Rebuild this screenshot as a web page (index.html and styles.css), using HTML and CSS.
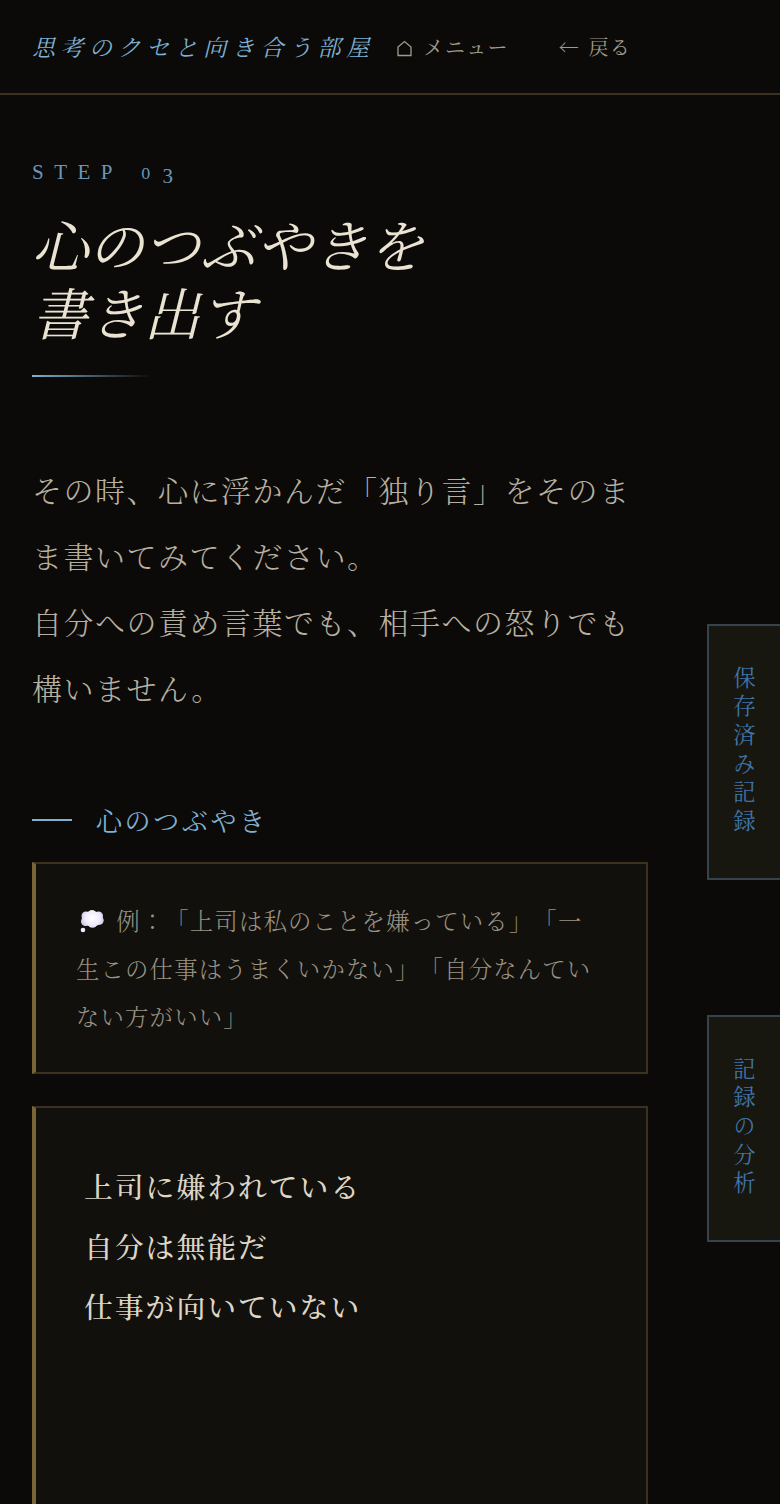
FILE: index.html
```html
<!DOCTYPE html>
<html lang="ja">
<head>
  <meta charset="UTF-8" />
  <meta name="viewport" content="width=device-width, initial-scale=1.0" />
  <title>思考のクセと向き合う部屋</title>
  <link rel="stylesheet" href="styles.css">
</head>
<body>

  <header class="site-header">
    <span class="site-title">思考のクセと向き合う部屋</span>
    <nav class="site-nav">
      <a class="nav-link">
        <svg class="nav-icon" viewBox="0 0 17 17" fill="none" stroke="currentColor" stroke-width="1.3">
          <path d="M2 7 L8.5 1.5 L15 7 V15.5 H2 Z" />
        </svg>メニュー
      </a>
      <a class="nav-link">← 戻る</a>
    </nav>
  </header>

  <main class="content">
    <p class="step-label">STEP <span class="step-zero">0</span><span class="step-three">3</span></p>
    <h1 class="page-title">心のつぶやきを<br>書き出す</h1>
    <div class="title-rule"></div>

    <p class="lead">その時、心に浮かんだ「独り言」をそのまま書いてみてください。<br>自分への責め言葉でも、相手への怒りでも構いません。</p>

    <label class="field-label" for="thoughts">心のつぶやき</label>
    <div class="example-box">
      <svg class="thought-icon" viewBox="0 0 26 24">
        <defs>
          <radialGradient id="bubble" gradientUnits="userSpaceOnUse" cx="13.5" cy="9" r="12">
            <stop offset="0" stop-color="#ffffff" />
            <stop offset="0.6" stop-color="#f0ecfb" />
            <stop offset="1" stop-color="#cfc6ea" />
          </radialGradient>
        </defs>
        <g fill="url(#bubble)">
          <ellipse cx="13.5" cy="10" rx="10" ry="7.5" />
          <circle cx="7" cy="7" r="4.5" />
          <circle cx="13" cy="5.5" r="4.5" />
          <circle cx="19.5" cy="7" r="4.5" />
          <circle cx="20.5" cy="11.5" r="4.2" />
          <circle cx="6.5" cy="12.5" r="4.5" />
          <circle cx="13.5" cy="14" r="4.8" />
          <circle cx="4" cy="21" r="2.3" fill="#eeeaf8" />
        </g>
      </svg>
      例：「上司は私のことを嫌っている」「一生この仕事はうまくいかない」「自分なんていない方がいい」
    </div>
    <textarea class="thoughts-input" id="thoughts">上司に嫌われている
自分は無能だ
仕事が向いていない</textarea>
  </main>

  <a class="side-tab side-tab-saved">保存済み記録</a>
  <a class="side-tab side-tab-analysis">記録の分析</a>

</body>
</html>
```

FILE: styles.css
```css
html, body {
  height: 1504px;
  overflow: hidden;
}

body {
  margin: 0;
  background-color: #0b0a09;
  background-image: radial-gradient(rgba(255, 255, 255, 0.02) 0.5px, transparent 0.5px);
  background-size: 4px 4px;
  color: #f0e8d8;
  font-family: "Noto Serif CJK JP", "Liberation Serif", "Noto Sans CJK JP", serif;
  text-spacing-trim: space-all;
}

.site-header {
  display: flex;
  align-items: center;
  gap: 21px;
  height: 93px;
  padding: 0 32px;
  border-bottom: 2px solid #3a3120;
}

.site-title {
  font-size: 23px;
  font-style: italic;
  letter-spacing: 5.55px;
  color: #7fb0d0;
  white-space: nowrap;
}

.site-nav {
  display: flex;
  gap: 50px;
}

.nav-link {
  font-size: 20px;
  letter-spacing: 1.3px;
  word-spacing: 2px;
  color: #a09a8a;
  white-space: nowrap;
}

.nav-icon {
  width: 17px;
  height: 17px;
  margin-right: 11px;
  vertical-align: -2px;
}

.content {
  width: 616px;
  padding: 0 32px;
}

.step-label {
  margin: 65px 0 0;
  font-family: "Liberation Serif", serif;
  font-size: 21px;
  letter-spacing: 0.5em;
  color: #6a97b8;
}

/* old style figures, the installed serif only has lining ones */
.step-zero {
  margin-left: 3px;
  font-family: "DejaVu Serif", serif;
  font-size: 15px;
  font-weight: 300;
  letter-spacing: 12px;
}

.step-three {
  position: relative;
  top: 4px;
}

.page-title {
  margin: 24px 0 0;
  font-size: 56px;
  font-weight: 400;
  font-style: italic;
  line-height: 68px;
  color: #ebe3d2;
}

.title-rule {
  width: 120px;
  height: 2px;
  margin-top: 30px;
  background: linear-gradient(to right, #7fb0d0, transparent);
}

.lead {
  margin: 79px 0 0;
  font-size: 30px;
  font-weight: 300;
  line-height: 66px;
  letter-spacing: 0.05em;
  color: #b8b0a0;
}

.field-label {
  display: flex;
  align-items: center;
  gap: 24px;
  margin-top: 81px;
  font-size: 26px;
  letter-spacing: 0.1em;
  color: #7fb0d0;
}

.field-label::before {
  content: "";
  width: 40px;
  height: 2px;
  background-color: #7fb0d0;
}

.example-box {
  margin-top: 24px;
  padding: 32px 40px;
  border: 2px solid #3a3120;
  border-left: 4px solid #7a6535;
  background-color: #11100c;
  font-size: 23.4px;
  font-weight: 300;
  line-height: 48px;
  letter-spacing: 1.15px;
  color: #9a9284;
}

.thought-icon {
  width: 26px;
  height: 24px;
  margin: 0 4px 0 3px;
  vertical-align: -3px;
}

.thoughts-input {
  display: block;
  box-sizing: border-box;
  width: 100%;
  height: 520px;
  margin-top: 32px;
  padding: 48px;
  border: 2px solid #3a3120;
  border-left: 4px solid #7a6535;
  border-radius: 0;
  background-color: #11100c;
  color: #ddd5c5;
  font-family: inherit;
  font-size: 28.8px;
  font-weight: 500;
  line-height: 60px;
  letter-spacing: 2px;
  resize: none;
  outline: none;
}

/* fixed tabs on the right edge */
.side-tab {
  position: fixed;
  right: -2px;
  box-sizing: border-box;
  width: 75px;
  padding: 40px 0;
  display: flex;
  align-items: center;
  justify-content: center;
  border: 2px solid #36434d;
  background-color: #17160f;
  writing-mode: vertical-rl;
  font-size: 22.4px;
  letter-spacing: 6.2px;
  color: #3f74a8;
}

.side-tab-saved {
  top: 624px;
}

.side-tab-analysis {
  top: 1015px;
}
```
